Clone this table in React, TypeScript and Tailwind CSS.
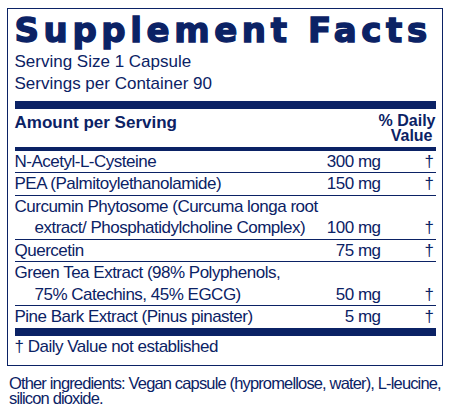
import React from "react";

const rows: { lines: string[]; amt: string }[] = [
  { lines: ["N-Acetyl-L-Cysteine"], amt: "300 mg" },
  { lines: ["PEA (Palmitoylethanolamide)"], amt: "150 mg" },
  {
    lines: ["Curcumin Phytosome (Curcuma longa root", "extract/ Phosphatidylcholine Complex)"],
    amt: "100 mg",
  },
  { lines: ["Quercetin"], amt: "75 mg" },
  { lines: ["Green Tea Extract (98% Polyphenols,", "75% Catechins, 45% EGCG)"], amt: "50 mg" },
  { lines: ["Pine Bark Extract (Pinus pinaster)"], amt: "5 mg" },
];

export default function App() {
  return (
    <div
      className="w-[450px] h-[412px] bg-white text-[#0b2265] overflow-hidden pt-[8px]"
      style={{ fontFamily: '"Liberation Sans", Arial, sans-serif' }}
    >
      <div className="ml-[7px] w-[436px] border-[1.5px] border-[#0b2265] px-[6.5px]">
        <div
          className="pt-[3.5px] text-[34px] leading-[34px] font-bold tracking-[4.6px] whitespace-nowrap [-webkit-text-stroke:1.4px_#0b2265]"
          style={{ fontFamily: '"DejaVu Sans", sans-serif' }}
        >
          Supplement Facts
        </div>
        <div className="mt-[4px] text-[17px] leading-[22px]">
          <div>Serving Size 1 Capsule</div>
          <div>Servings per Container 90</div>
        </div>
        <div className="mt-[6px] h-[8px] bg-[#0b2265]" />
        <div className="flex justify-between pt-[4px] pb-[4px]">
          <div className="pt-[1.6px] text-[17px] leading-[17px] font-bold">Amount per Serving</div>
          <div className="text-right text-[16px] leading-[15px] font-bold">
            <div>% Daily</div>
            <div className="pr-[3px]">Value</div>
          </div>
        </div>
        <div className="h-[4px] bg-[#0b2265]" />
        <div className="text-[17px] leading-[21.5px] tracking-[-0.5px]">
          {rows.map((r, i) => (
            <div
              key={i}
              className={
                "flex items-end " + (i < rows.length - 1 ? "border-b-[1.5px] border-[#0b2265]" : "")
              }
            >
              <div className="flex-1 whitespace-nowrap">
                {r.lines.map((l, j) => (
                  <div key={j} className={j > 0 ? "pl-[20px]" : ""}>
                    {l}
                  </div>
                ))}
              </div>
              <div className="whitespace-nowrap text-right">{r.amt}</div>
              <div className="w-[55px] text-right pr-[2px]">†</div>
            </div>
          ))}
        </div>
        <div className="h-[8px] bg-[#0b2265]" />
        <div className="pb-[7.5px] text-[17px] leading-[21.5px] tracking-[-0.5px]">
          † Daily Value not established
        </div>
      </div>
      <div className="mt-[10.5px] ml-[9px] text-[16.5px] leading-[15px] tracking-[-0.85px] whitespace-nowrap">
        <div>Other ingredients: Vegan capsule (hypromellose, water), L-leucine,</div>
        <div>silicon dioxide.</div>
      </div>
    </div>
  );
}
